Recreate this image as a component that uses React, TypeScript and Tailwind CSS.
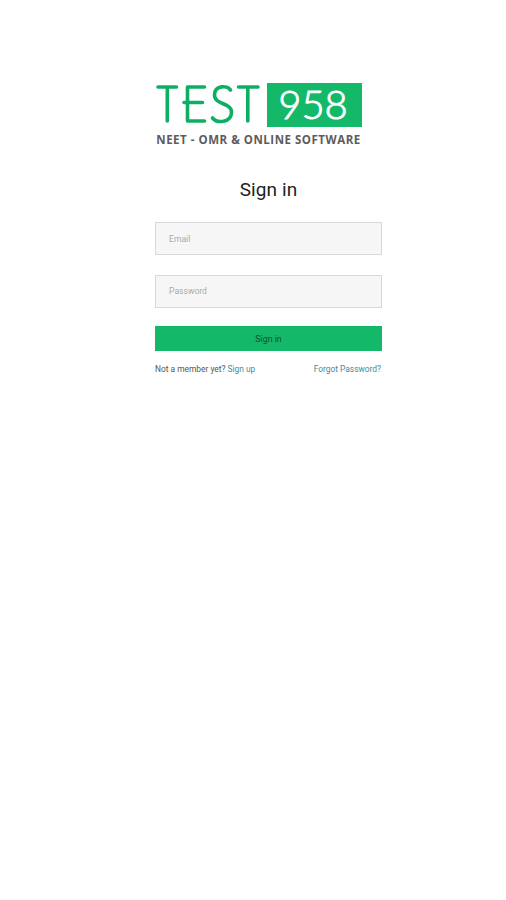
import { useState } from 'react';

function Logo() {
  return (
    <div className="w-[207px]">
      <div className="flex h-11 items-stretch justify-between">
        {/* The wordmark is drawn in a rounded monoline style */}
        <svg
          role="img"
          aria-label="TEST"
          width="107"
          height="44"
          viewBox="0 0 107 44"
          fill="none"
          stroke="#0eae65"
          strokeWidth="3.6"
          strokeLinecap="round"
          strokeLinejoin="round"
        >
          <path d="M3 4H21.500M12.300 4V38" />
          <path d="M49.500 4H32.500V38H49.500M29 19.500H47.500" />
          <path d="M75.500 7C72.500 2 59.500 2 59.500 12C59.500 22 76.500 19.500 76.500 29C76.500 40 62 40.500 57.500 35" />
          <path d="M83.500 4H103M92.800 4V38" />
        </svg>
        <div className="flex w-[95px] items-center justify-center bg-[#13b969] pb-[2px] pr-[3px] text-[40px] leading-none text-white">
          <span className="font-[Lato,sans-serif] font-light [-webkit-text-stroke:0.9px_white]">958</span>
        </div>
      </div>
      <p className="mt-[5px] whitespace-nowrap text-center font-['Open_Sans',sans-serif] text-[11.5px] font-bold leading-[15px] tracking-[0.52px] text-[#5c5c5c]">
        NEET - OMR &amp; ONLINE SOFTWARE
      </p>
    </div>
  );
}

export default function App() {
  const [email, setEmail] = useState('');
  const [password, setPassword] = useState('');

  return (
    <main className="min-h-screen bg-white pl-[155px] pt-[83px] font-[Roboto,sans-serif]">
      <div className="w-[227px]">
        <Logo />

        <h1 className="mt-[29px] text-center text-[19px] leading-7 tracking-[0.1px] text-[#222]">Sign in</h1>

        <form className="mt-[18px]" onSubmit={(e) => e.preventDefault()}>
          <input
            type="email"
            placeholder="Email"
            value={email}
            onChange={(e) => setEmail(e.target.value)}
            className="block h-[33px] w-full border border-[#d8d8d8] bg-[#f6f6f6] px-[13px] text-[8.6px] placeholder:text-[#aaa]"
          />
          <input
            type="password"
            placeholder="Password"
            value={password}
            onChange={(e) => setPassword(e.target.value)}
            className="mt-[20px] block h-[33px] w-full border border-[#d8d8d8] bg-[#f6f6f6] px-[13px] pb-[2px] text-[8.6px] placeholder:text-[#aaa]"
          />
          <button type="submit" className="mt-[18px] block h-[25px] w-full bg-[#13b969] pt-[2px] text-[8.8px] text-[#174c31]">
            Sign in
          </button>
        </form>

        <div className="mt-3 flex justify-between pr-px text-[8.4px] leading-3 text-[#555]">
          <p>
            Not a member yet? <a href="#" className="text-[#438c98]">Sign up</a>
          </p>
          <a href="#" className="text-[#438c98]">Forgot Password?</a>
        </div>
      </div>
    </main>
  );
}
